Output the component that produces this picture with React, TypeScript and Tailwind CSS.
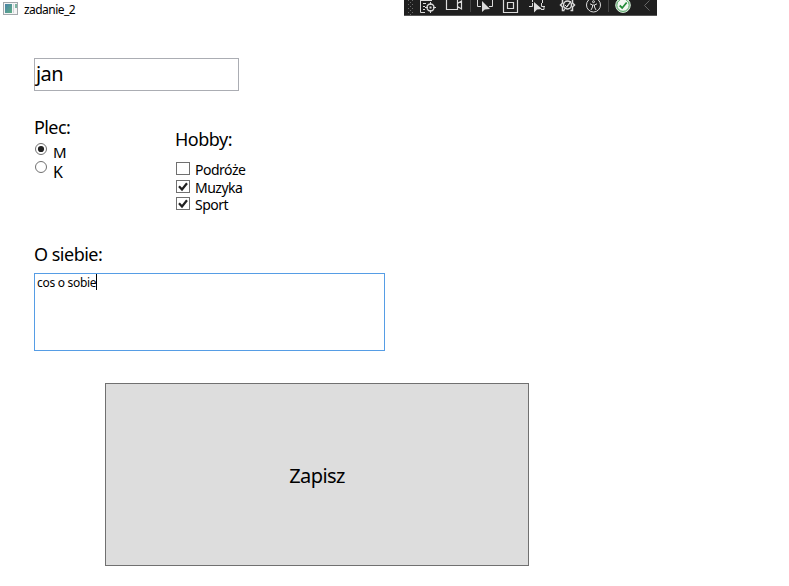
import type { ReactNode } from "react";

function Tool({ width, children }: { width: number; children: ReactNode }) {
  return (
    <svg width={width} height={15} viewBox={`0 0 ${width} 15`} fill="none" stroke="#dcdcdc" className="shrink-0 overflow-visible">
      {children}
    </svg>
  );
}

function DebugToolbar() {
  return (
    <div className="ml-auto mr-[132px] flex h-4 w-[253px] shrink-0 overflow-hidden border-b border-[#555] bg-[#1f1f1f]">
      <Tool width={14}>
        <g stroke="none" fill="#6a6a6a">
          {[1, 5, 9, 13].map((y) => (
            <g key={y}>
              <rect x="4" y={y - 1} width="1" height="1" />
              <rect x="8" y={y - 1} width="1" height="1" />
              <rect x="6" y={y + 1} width="1" height="1" />
            </g>
          ))}
        </g>
      </Tool>
      <Tool width={28}>
        <path d="M2.5 0V12.5H7M2 .5H14M5 3.5H8M5 6.5H7M5 9.5H7" />
        <circle cx="12.5" cy="7.5" r="3.5" strokeWidth="1.4" />
        <path d="M12.5 2V5M12.5 10V13M7 7.5H10M15 7.5H18" />
        <rect x="12" y="7" width="1" height="1" />
      </Tool>
      <Tool width={28}>
        <path d="M.5 0V9.5H11.5V0M11.5 3.5L15.5 1V9L11.5 6.5" strokeWidth="1.2" />
      </Tool>
      <Tool width={28}>
        <path d="M-3.5 0V12" stroke="#454545" />
        <path d="M3.5 0V6.5H7M18.5 0V6.5H15" />
        <path d="M8 1V12L10.8 9.4L16 9Z" fill="#dcdcdc" stroke="none" />
      </Tool>
      <Tool width={28}>
        <path d="M1.5 0V12.5H15.5V0M5.5 2.5H11.5V8.5H5.5Z" strokeWidth="1.2" />
      </Tool>
      <Tool width={29}>
        <path d="M-1 6.5H2.5V3M11.5 3V6.5H15M2.5 0V2M12.5 0V3M11 9.5H14V6" />
        <path d="M4 2V12.5L7 9.6L12 9Z" fill="#dcdcdc" stroke="none" />
      </Tool>
      <Tool width={29}>
        <path d="M3.5 0V3L1.5 5L3.5 7V10.5H5.5M13.5 0V3L15.5 5L13.5 7V10.5H11.5" strokeWidth="1.5" />
        <circle cx="8.5" cy="5" r="4" strokeWidth="1.5" />
        <path d="M5 10L12 1M6 5L8 7L11 3" />
      </Tool>
      <Tool width={28}>
        <circle cx="5.5" cy="5" r="7" />
        <circle cx="5.5" cy="1.7" r="1" />
        <path d="M2 3.8L4.5 5V7L3 10M9 3.8L6.5 5V7L8 10M4.5 5H6.5" />
      </Tool>
      <Tool width={25}>
        <path d="M-7.5 0V12" stroke="#454545" />
        <circle cx="7" cy="5.2" r="7.3" fill="#f2f7f2" stroke="#cce5cf" />
        <circle cx="7" cy="5.2" r="6.2" stroke="#49a35b" />
        <path d="M3.7 5.5L6.2 8L10.7 2.5" stroke="#228b37" strokeWidth="1.8" />
      </Tool>
      <Tool width={16}>
        <path d="M8.5 .5L3.5 5.5L8.5 10.5" stroke="#666" />
      </Tool>
      <Tool width={4}>
        <path d="M0 0" />
      </Tool>
    </div>
  );
}

function AppIcon() {
  return (
    <svg width="16" height="14" viewBox="0 0 16 14" className="mt-[2px] shrink-0">
      <defs>
        <linearGradient id="pane" x1="0" y1="0" x2="1" y2="1">
          <stop stopColor="#4a82a8" />
          <stop offset="1" stopColor="#5fae84" />
        </linearGradient>
      </defs>
      <rect x=".5" y=".5" width="14" height="12" fill="#f5f5f5" stroke="#a3a8ac" />
      <rect x="2" y="2" width="7" height="9" fill="url(#pane)" />
      <rect x="10" y="2" width="1" height="9" fill="#cfd4d8" />
      <rect x="12" y="2" width="2" height="4" fill="#7bb3a0" />
    </svg>
  );
}

function Radio({ checked = false }: { checked?: boolean }) {
  return (
    <svg width="13" height="13" viewBox="0 0 13 13" className="shrink-0">
      <circle cx="6" cy="6" r="5.5" fill="#fff" stroke="#707070" />
      {checked && <circle cx="6" cy="6" r="3.1" fill="#212121" />}
    </svg>
  );
}

function Hobby({ label, checked = false, className }: { label: string; checked?: boolean; className: string }) {
  return (
    <div className={`flex ${className}`}>
      <svg width="14" height="14" viewBox="0 0 14 14" className="ml-px mt-px shrink-0">
        <rect x=".5" y=".5" width="13" height="12" fill="#fff" stroke="#707070" />
        {checked && <path d="M3 6.2L6 9.5L11 3.3" fill="none" stroke="#212121" strokeWidth="2.2" />}
      </svg>
      <span className="ml-[5px] text-[14px] leading-[17px] tracking-[-0.5px]">{label}</span>
    </div>
  );
}

export default function App() {
  return (
    <div className="flex h-[586px] w-[789px] flex-col overflow-hidden whitespace-nowrap bg-white font-['Noto_Sans','Open_Sans',sans-serif] text-black">
      <header className="flex h-4 shrink-0 pl-[3px]">
        <AppIcon />
        <span className="ml-[5px] mt-[2px] text-[12px] leading-4 tracking-[-0.55px]">zadanie_2</span>
        <DebugToolbar />
      </header>
      <main className="flex flex-col items-start pl-[34px] pt-[42px]">
        <div className="h-[33px] w-[205px] border border-[#abadb3] pl-px text-[20px] leading-[29px] tracking-[-0.6px]">jan</div>
        <div className="flex h-[151px] pt-6">
          <section className="w-[141px]">
            <h2 className="text-[18px] leading-6 tracking-[-0.6px]">Plec:</h2>
            <div className="ml-px mt-[4px] flex h-[18px]">
              <Radio checked />
              <span className="ml-[5px] text-[15px] leading-[18px]">M</span>
            </div>
            <div className="ml-px flex h-[18px]">
              <Radio />
              <span className="ml-[5px] mt-[2px] text-[16px] leading-[18px]">K</span>
            </div>
          </section>
          <section className="pt-3">
            <h2 className="text-[18px] leading-6 tracking-[-0.5px]">Hobby:</h2>
            <Hobby label="Podróże" className="mt-[10px] h-[18px]" />
            <Hobby label="Muzyka" checked className="h-[17px]" />
            <Hobby label="Sport" checked className="h-[18px]" />
          </section>
        </div>
        <h2 className="text-[18px] leading-6 tracking-[-0.5px]">O siebie:</h2>
        <div className="mt-[7px] flex h-[78px] w-[351px] border border-[#569de5] pl-[2px]">
          <span className="w-[59px] text-[12px] leading-[18px] tracking-[-0.3px]">cos o sobie</span>
          <span className="h-4 w-px bg-black" />
        </div>
        <div className="ml-[71px] mt-8 flex h-[183px] w-[424px] items-center justify-center border border-[#707070] bg-[#ddd] pt-[2px] text-[20px] leading-7 tracking-[-0.6px]">
          Zapisz
        </div>
      </main>
    </div>
  );
}
